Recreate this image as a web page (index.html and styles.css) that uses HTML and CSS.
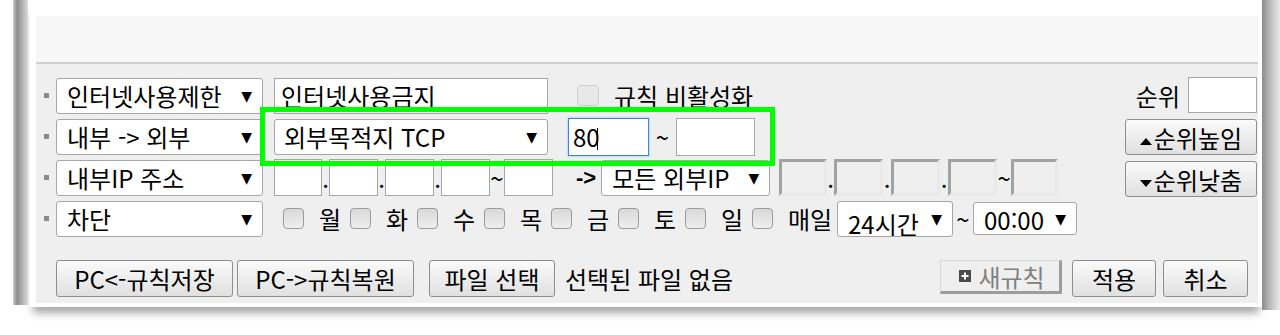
FILE: index.html
```html
<!DOCTYPE html>
<html lang="ko">
<head>
  <meta charset="UTF-8">
  <title>방화벽 규칙 설정</title>
  <link rel="stylesheet" href="styles.css">
</head>
<body>

  <div class="page">
    <div class="edge-left"><div class="edge-bar"></div></div>

    <div class="frame">
      <div class="frame-head"></div>

      <div class="rule-box">
        <div class="rule-main">
          <div class="rules">
            <div class="row">
              <span class="dot"></span>
              <span class="sel w-type"><select><option>인터넷사용제한</option></select></span>
              <input class="txt w-name" type="text" value="인터넷사용금지">
              <input class="chk chk-off" type="checkbox" disabled>
              <span class="chk-label">규칙 비활성화</span>
            </div>

            <div class="row">
              <span class="dot"></span>
              <span class="sel w-type"><select><option>내부 -&gt; 외부</option></select></span>
              <span class="sel w-name"><select><option>외부목적지 TCP</option></select></span>
              <input class="txt port port-focus" type="text" value="80">
              <span class="sep w-tilde">~</span>
              <input class="txt port2" type="text">
            </div>

            <div class="row">
              <span class="dot"></span>
              <span class="sel w-type"><select><option>내부IP 주소</option></select></span>
              <input class="txt ip first" type="text">
              <span class="sep w-dot">.</span>
              <input class="txt ip" type="text">
              <span class="sep w-dot">.</span>
              <input class="txt ip" type="text">
              <span class="sep w-dot">.</span>
              <input class="txt ip" type="text">
              <span class="sep w-tilde2">~</span>
              <input class="txt ip" type="text">
              <span class="to">-&gt;</span>
              <span class="sel w-dest"><select><option>모든 외부IP</option></select></span>
              <span class="ip-off first"></span>
              <span class="sep w-dot">.</span>
              <span class="ip-off"></span>
              <span class="sep w-dot2">.</span>
              <span class="ip-off"></span>
              <span class="sep w-dot2">.</span>
              <span class="ip-off"></span>
              <span class="sep w-tilde2">~</span>
              <span class="ip-off last"></span>
            </div>

            <div class="row">
              <span class="dot"></span>
              <span class="sel w-type"><select><option>차단</option></select></span>
              <div class="days">
                <input class="chk" type="checkbox"><span class="day">월</span>
                <input class="chk" type="checkbox"><span class="day">화</span>
                <input class="chk" type="checkbox"><span class="day">수</span>
                <input class="chk" type="checkbox"><span class="day">목</span>
                <input class="chk" type="checkbox"><span class="day">금</span>
                <input class="chk" type="checkbox"><span class="day">토</span>
                <input class="chk" type="checkbox"><span class="day">일</span>
                <input class="chk" type="checkbox"><span class="day every">매일</span>
              </div>
              <span class="sel w-hour"><select><option>24시간</option></select></span>
              <span class="sep w-tilde3">~</span>
              <span class="sel w-time"><select><option>00:00</option></select></span>
            </div>
          </div>

          <div class="side">
            <div class="rank">
              <span>순위</span>
              <input class="txt w-rank" type="text">
            </div>
            <button class="btn btn-side">
              <svg width="12" height="7" viewBox="0 0 12 7"><polygon points="6,0 12,7 0,7" fill="#000"/></svg>순위높임
            </button>
            <button class="btn btn-side">
              <svg width="12" height="7" viewBox="0 0 12 7"><polygon points="0,0 12,0 6,7" fill="#000"/></svg>순위낮춤
            </button>
          </div>
        </div>

        <div class="actions">
          <button class="btn w-pc">PC&lt;-규칙저장</button>
          <button class="btn w-pc second">PC-&gt;규칙복원</button>
          <button class="btn w-file">파일 선택</button>
          <span class="file-name">선택된 파일 없음</span>
          <span class="spacer"></span>
          <button class="btn-new" disabled>
            <svg width="12" height="12" viewBox="0 0 12 12"><rect width="12" height="12" fill="#4a4a4a"/><path d="M6 2.5v7M2.5 6h7" stroke="#fff" stroke-width="2"/></svg>새규칙
          </button>
          <button class="btn w-ok">적용</button>
          <button class="btn w-cancel">취소</button>
        </div>

        <div class="mark"></div>
      </div>
    </div>

    <div class="edge-right"><div class="edge-bar2"></div></div>
  </div>

</body>
</html>
```

FILE: styles.css
```css
* { box-sizing: border-box; }

body {
  margin: 0;
  background: #fff;
  font-family: "Noto Sans CJK KR", "Liberation Sans", sans-serif;
  font-size: 24px;
  color: #000;
  white-space: nowrap;
}

.page {
  display: flex;
  height: 335px;
  overflow: hidden;
}

/* 창 테두리 장식 */
.edge-left {
  width: 30px;
  flex: none;
  padding-left: 13px;
}

.edge-bar {
  width: 15px;
  height: 305px;
  background: linear-gradient(to right, #d0d0d0, #8e8e8e 25%, #a8a8a8 55%, #dedede);
}

.edge-right {
  width: 18px;
  flex: none;
}

.edge-bar2 {
  width: 18px;
  height: 310px;
  background: linear-gradient(to right, #8c8c8c, #b6b6b6 40%, #dadada 80%, #e8e8e8);
}

.frame {
  width: 1232px;
  height: 307px;
  flex: none;
  padding: 16px 4px 4px 6px;
  background: #fff;
  box-shadow: 0 9px 8px -3px rgba(0, 0, 0, 0.35);
}

.frame-head {
  height: 48px;
  background: #f7f7f7;
  border-bottom: 2px solid #cfcfcf;
}

.rule-box {
  position: relative;
  height: 239px;
  background: #efefef;
  padding: 13px 1px 0 8px;
}

.rule-main {
  display: flex;
}

.rules {
  flex: 1;
}

.row {
  display: flex;
  align-items: center;
  height: 37px;
  margin-bottom: 4px;
}

.dot {
  width: 5px;
  height: 5px;
  flex: none;
  margin-right: 7px;
  background: #8a8a8a;
}

/* 선택 상자 */
.sel {
  position: relative;
  display: block;
  flex: none;
  height: 36px;
}

.sel select {
  -webkit-appearance: none;
  appearance: none;
  width: 100%;
  height: 100%;
  font: inherit;
  line-height: 34px;
  color: #000;
  background: #fff;
  border: 1px solid #a6a6a6;
  border-radius: 3px;
  padding: 0 30px 0 10px;
}

.sel::after {
  content: "▼";
  position: absolute;
  right: 11px;
  top: 50%;
  transform: translateY(-50%);
  font-family: "DejaVu Sans", sans-serif;
  font-size: 14px;
  pointer-events: none;
}

.w-type { width: 207px; }
.w-name { width: 274px; margin-left: 11px; }
.w-dest { width: 169px; }
.w-hour { width: 116px; margin-left: 5px; }
.w-hour select { padding-top: 5px; }
.w-time { width: 104px; height: 33px; }

.w-name.sel select { padding-left: 9px; }

/* 입력 상자 */
.txt {
  font: inherit;
  color: #000;
  height: 36px;
  flex: none;
  border: 1px solid #a6a6a6;
  border-radius: 0;
  background: #fff;
  padding: 0 6px;
}

.port {
  width: 81px;
  height: 38px;
  margin-left: 20px;
  padding: 0 4px;
}

.port-focus {
  border-color: #3d84dc;
  box-shadow: 0 0 2px #7fb0ee;
  background: #fff linear-gradient(#000, #000) no-repeat 28px 9px / 1px 22px;
}

.port2 {
  width: 79px;
  height: 38px;
}

.ip {
  width: 49px;
  height: 37px;
}

.ip.first {
  width: 48px;
  margin-left: 11px;
}

.sep {
  flex: none;
  text-align: center;
}

.w-dot { width: 7px; }
.w-dot2 { width: 8px; }
.w-tilde { width: 27px; }
.w-tilde2 { width: 14px; }
.w-tilde3 { width: 20px; }

.to {
  flex: none;
  font-family: "Liberation Sans", sans-serif;
  font-size: 22px;
  font-weight: bold;
  margin: 0 5px 0 23px;
}

.ip-off {
  width: 49px;
  height: 37px;
  flex: none;
  border: 3px solid;
  border-color: #a2a2a2 #e9e9e9 #e9e9e9 #a2a2a2;
  background: #efefef;
}

.ip-off.first {
  width: 48px;
  margin-left: 9px;
}

.ip-off.last { width: 47px; }

/* 체크박스 */
.chk {
  -webkit-appearance: none;
  appearance: none;
  width: 21px;
  height: 21px;
  flex: none;
  margin: 0;
  border: 1px solid #9b9b9b;
  border-radius: 4px;
  background: linear-gradient(#d9d9d9, #eeeeee);
}

.chk-off {
  width: 22px;
  margin-left: 29px;
  border-color: #cfcfcf;
  background: #e8e8e8;
}

.chk-label { margin-left: 15px; }

.days {
  display: flex;
  align-items: center;
  flex: none;
  margin-left: 20px;
}

.day {
  width: 22px;
  flex: none;
  margin: 0 9px 0 15px;
}

.day.every {
  width: 44px;
  margin-right: 0;
}

/* 버튼 */
.btn {
  font: inherit;
  color: #000;
  height: 37px;
  flex: none;
  padding: 0;
  border: 1px solid #8e8e8e;
  border-radius: 3px;
  background: linear-gradient(#fafafa, #e0e0e0);
}

.side {
  width: 132px;
  flex: none;
  display: flex;
  flex-direction: column;
  align-items: flex-end;
}

.rank {
  display: flex;
  align-items: center;
  height: 36px;
}

.rank span { margin-right: 8px; }

.w-rank {
  width: 69px;
  height: 36px;
}

.btn-side {
  width: 132px;
  height: 36px;
  margin-top: 6px;
  display: flex;
  align-items: center;
  justify-content: center;
  gap: 2px;
}

.btn-side svg { margin-top: 8px; }

.actions {
  display: flex;
  align-items: flex-start;
  margin-top: 19px;
  padding: 0 9px 0 12px;
}

.w-pc { width: 177px; }
.w-pc.second { margin-left: 4px; }
.w-file { width: 126px; margin-left: 15px; }

.file-name {
  margin-left: 10px;
  line-height: 37px;
}

.spacer { flex: 1; }

.btn-new {
  font: inherit;
  color: #808080;
  width: 122px;
  height: 34px;
  display: flex;
  align-items: center;
  justify-content: center;
  gap: 7px;
  border-style: solid;
  border-width: 1px 3px 3px 1px;
  border-color: #d8d8d8 #9d9d9d #9d9d9d #d8d8d8;
  background: #efefef;
  padding: 0 0 0 4px;
}

.w-ok { width: 84px; margin-left: 10px; }
.w-cancel { width: 85px; margin-left: 7px; }

/* 강조 표시 */
.mark {
  position: absolute;
  left: 224px;
  top: 43px;
  width: 515px;
  height: 59px;
  border: 5px solid #00ff00;
}
```
